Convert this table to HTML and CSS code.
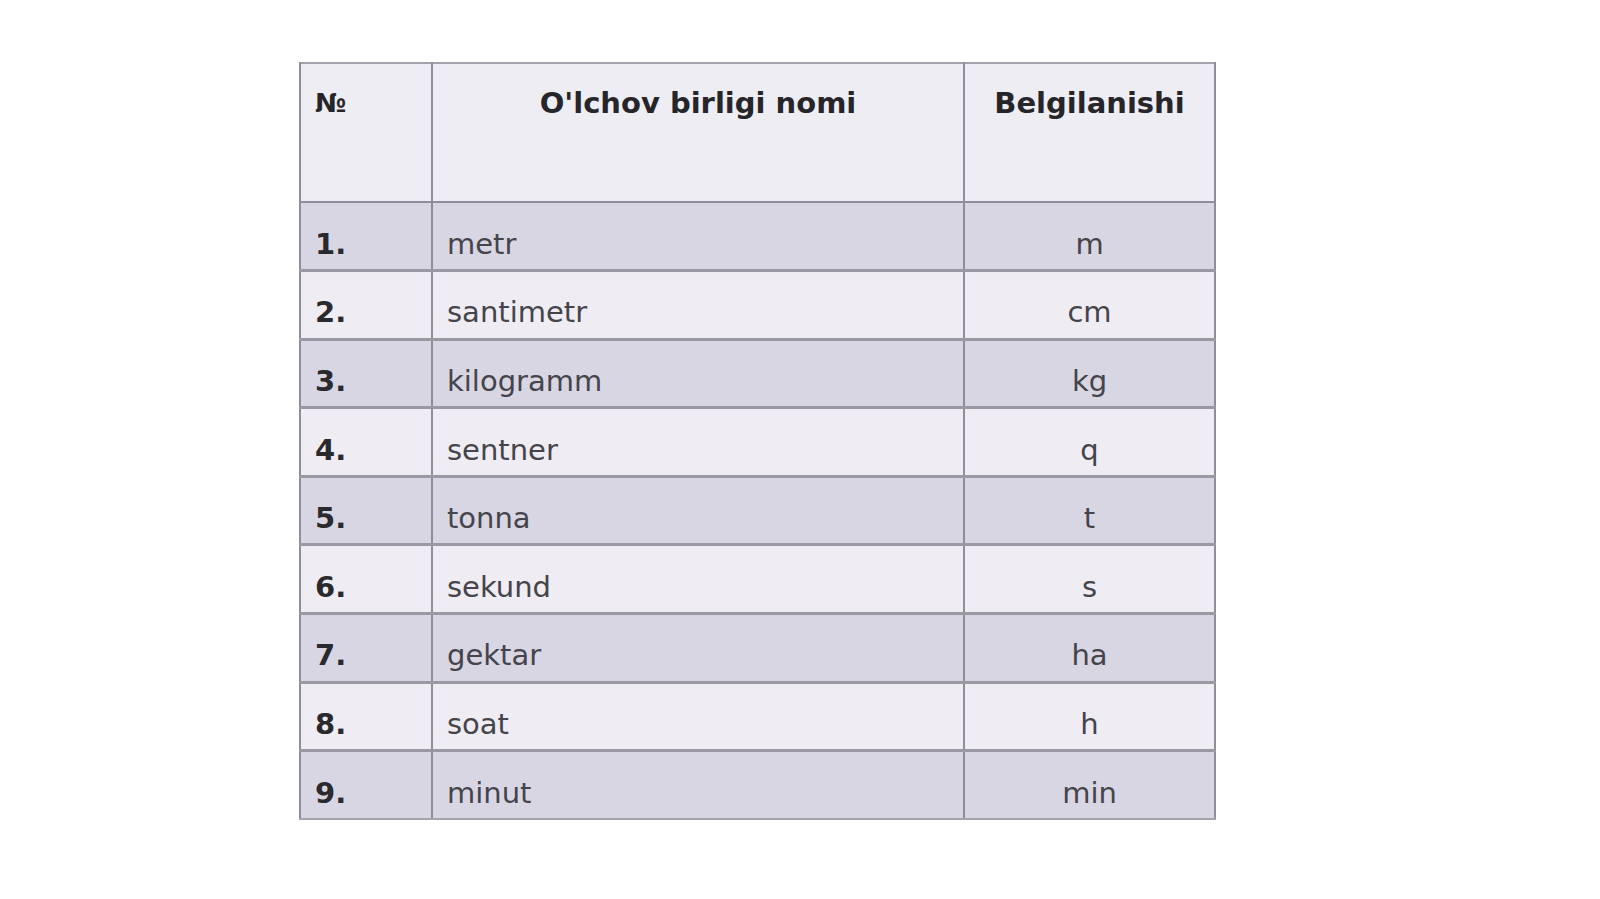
FILE: index.html
```html
<!DOCTYPE html>
<html lang="uz">
<head>
<meta charset="utf-8">
<title>O'lchov birliklari</title>
<link rel="stylesheet" href="styles.css">
</head>
<body>
<main class="page">
  <table class="units">
    <colgroup>
      <col class="c-num">
      <col class="c-name">
      <col class="c-sym">
    </colgroup>
    <thead>
      <tr>
        <th class="num">№</th>
        <th class="name">O'lchov birligi nomi</th>
        <th class="sym">Belgilanishi</th>
      </tr>
    </thead>
    <tbody>
      <tr class="dark"><td class="num">1.</td><td class="name">metr</td><td class="sym">m</td></tr>
      <tr><td class="num">2.</td><td class="name">santimetr</td><td class="sym">cm</td></tr>
      <tr class="dark"><td class="num">3.</td><td class="name">kilogramm</td><td class="sym">kg</td></tr>
      <tr><td class="num">4.</td><td class="name">sentner</td><td class="sym">q</td></tr>
      <tr class="dark"><td class="num">5.</td><td class="name">tonna</td><td class="sym">t</td></tr>
      <tr><td class="num">6.</td><td class="name">sekund</td><td class="sym">s</td></tr>
      <tr class="dark"><td class="num">7.</td><td class="name">gektar</td><td class="sym">ha</td></tr>
      <tr><td class="num">8.</td><td class="name">soat</td><td class="sym">h</td></tr>
      <tr class="dark"><td class="num">9.</td><td class="name">minut</td><td class="sym">min</td></tr>
    </tbody>
  </table>
</main>
</body>
</html>
```
FILE: styles.css
```css
html, body {
  margin: 0;
  padding: 0;
  background: #ffffff;
}

.page {
  padding: 62px 0 0 299px;
  font-family: "DejaVu Sans", "Liberation Sans", sans-serif;
}

.units {
  border-collapse: collapse;
  width: 915px;
  table-layout: fixed;
  border: 2px solid #a4a2ac;
}

.c-num { width: 132px; }
.c-name { width: 532px; }
.c-sym { width: 251px; }

.units th,
.units td {
  border-left: 2px solid #8f8d99;
  border-right: 2px solid #8f8d99;
  padding: 0;
}

.units thead th {
  height: 139px;
  box-sizing: border-box;
  vertical-align: top;
  padding-top: 22px;
  background: #efedf4;
  font-size: 29px;
  font-weight: bold;
  color: #262529;
  line-height: 34px;
  border-bottom: 2px solid #8f8d99;
}

.units thead th.num {
  text-align: left;
  padding-left: 14px;
  font-size: 26px;
}

.units thead th.name,
.units thead th.sym {
  text-align: center;
}

.units tbody td {
  height: 68.6px;
  box-sizing: border-box;
  vertical-align: middle;
  padding-top: 15px;
  background: #efecf4;
  border-bottom: 3px solid #9a98a3;
  font-size: 29px;
  color: #45444a;
  line-height: 34px;
}

.units tbody tr.dark td {
  background: #d9d6e3;
}

.units tbody tr:last-child td {
  border-bottom: 2px solid #a4a2ac;
}

.units td.num {
  padding-left: 14px;
  font-weight: bold;
  color: #2a292d;
}

.units td.name {
  padding-left: 14px;
}

.units td.sym {
  text-align: center;
}
```
